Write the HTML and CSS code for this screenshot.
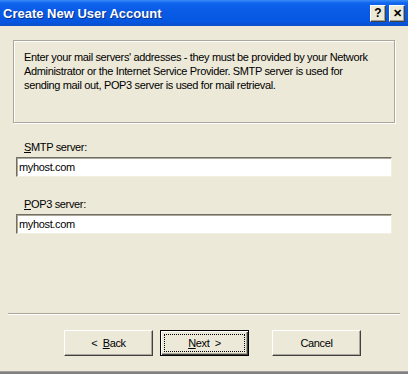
FILE: index.html
```html
<!DOCTYPE html>
<html>
<head>
<meta charset="utf-8">
<link rel="stylesheet" href="styles.css">
</head>
<body>
<div class="window">
  <div class="titlebar">
    <span class="title">Create New User Account</span>
    <div class="tbtns">
      <span class="tbtn">?</span>
      <span class="tbtn close">✕</span>
    </div>
  </div>
  <div class="content">
    <div class="info">Enter your mail servers' addresses - they must be provided by your Network Administrator or the Internet Service Provider. SMTP server is used for sending mail out, POP3 server is used for mail retrieval.</div>
    <div class="field first">
      <label><u>S</u>MTP server:</label>
      <div class="input">myhost.com</div>
    </div>
    <div class="field">
      <label><u>P</u>OP3 server:</label>
      <div class="input">myhost.com</div>
    </div>
    <div class="spacer"></div>
    <div class="sep"></div>
    <div class="buttons">
      <div class="btn">&lt;&nbsp;&nbsp;<u>B</u>ack</div>
      <div class="btn default"><div class="focus"><u>N</u>ext&nbsp;&nbsp;&gt;</div></div>
      <div class="btn cancel">Cancel</div>
    </div>
  </div>
  <div class="bottom"></div>
</div>
</body>
</html>
```
FILE: styles.css
```css
html, body { margin: 0; padding: 0; }
body {
  width: 408px; height: 374px; overflow: hidden;
  font-family: "Liberation Sans", Arial, sans-serif;
  font-size: 11px; color: #000;
  letter-spacing: -0.35px;
  background: #ECE9D8;
}
.window { display: flex; flex-direction: column; height: 374px; }
.titlebar {
  height: 26px; flex: none;
  background: linear-gradient(to bottom, #3A8CF8 0px, #1065EE 3px, #0A5BE6 10px, #0556E0 22px, #0A4FC8 26px);
  display: flex; align-items: center; justify-content: space-between;
  padding: 0 3px 0 3px;
  letter-spacing: 0;
}
.title {
  color: #fff; font-weight: bold; font-size: 13px;
  font-family: "Liberation Sans", Arial, sans-serif;
  text-shadow: 1px 1px 0 #0A2F8A;
}
.tbtns { display: flex; gap: 3px; margin-top: 1px; }
.tbtn {
  width: 14px; height: 15px;
  background: #ECE9D8;
  border: 1px solid; border-color: #fff #404040 #404040 #fff;
  box-shadow: inset -1px -1px 0 #A0A0A0;
  font-weight: bold; font-size: 12px; line-height: 15px; text-align: center;
  color: #000;
}
.close { font-size: 11px; }
.content {
  flex: 1; display: flex; flex-direction: column;
  padding: 14px 16px 0 16px;
}
.info {
  margin: 0 -3px;
  height: 72px;
  border: 1px solid #ACA899; box-shadow: 1px 1px 0 #fff, inset 1px 1px 0 #fff;
  padding: 9px 17px 0 10px;
  line-height: 14px;
  color: #000;
}
.field { display: flex; flex-direction: column; }
.field.first { margin-top: 17px; }
.field + .field { margin-top: 20px; }
.field label { padding-left: 8px; height: 14px; line-height: 14px; margin-bottom: 3px; }
.input {
  height: 20px; box-sizing: border-box;
  background: #fff;
  border: 1px solid; border-color: #716F64 #F1EFE2 #F1EFE2 #716F64;
  box-shadow: inset 1px 1px 0 #ACA899;
  padding: 0 2px; line-height: 18px;
}
.spacer { flex: 1; }
.sep {
  margin: 0 -8px;
  height: 0; border-top: 1px solid #ACA899; border-bottom: 1px solid #fff;
}
.buttons {
  display: flex; gap: 7px; padding: 15px 0 0 48px; height: 41px;
}
.btn {
  width: 89px; height: 26px; box-sizing: border-box;
  background: #ECE9D8;
  border: 1px solid; border-color: #fff #404040 #404040 #fff;
  box-shadow: inset -1px -1px 0 #ACA899;
  display: flex; align-items: center; justify-content: center;
}
.btn.cancel { margin-left: 16px; }
.btn.default {
  border: 1px solid #000;
  box-shadow: inset 1px 1px 0 #fff, inset -1px -1px 0 #404040, inset -2px -2px 0 #ACA899;
  padding: 3px;
}
.focus {
  width: 100%; height: 100%; box-sizing: border-box;
  border: 1px dotted #000;
  display: flex; align-items: center; justify-content: center;
}
.bottom { height: 2px; background: #808080; border-top: 1px solid #A0A0A0; flex: none; }
```
